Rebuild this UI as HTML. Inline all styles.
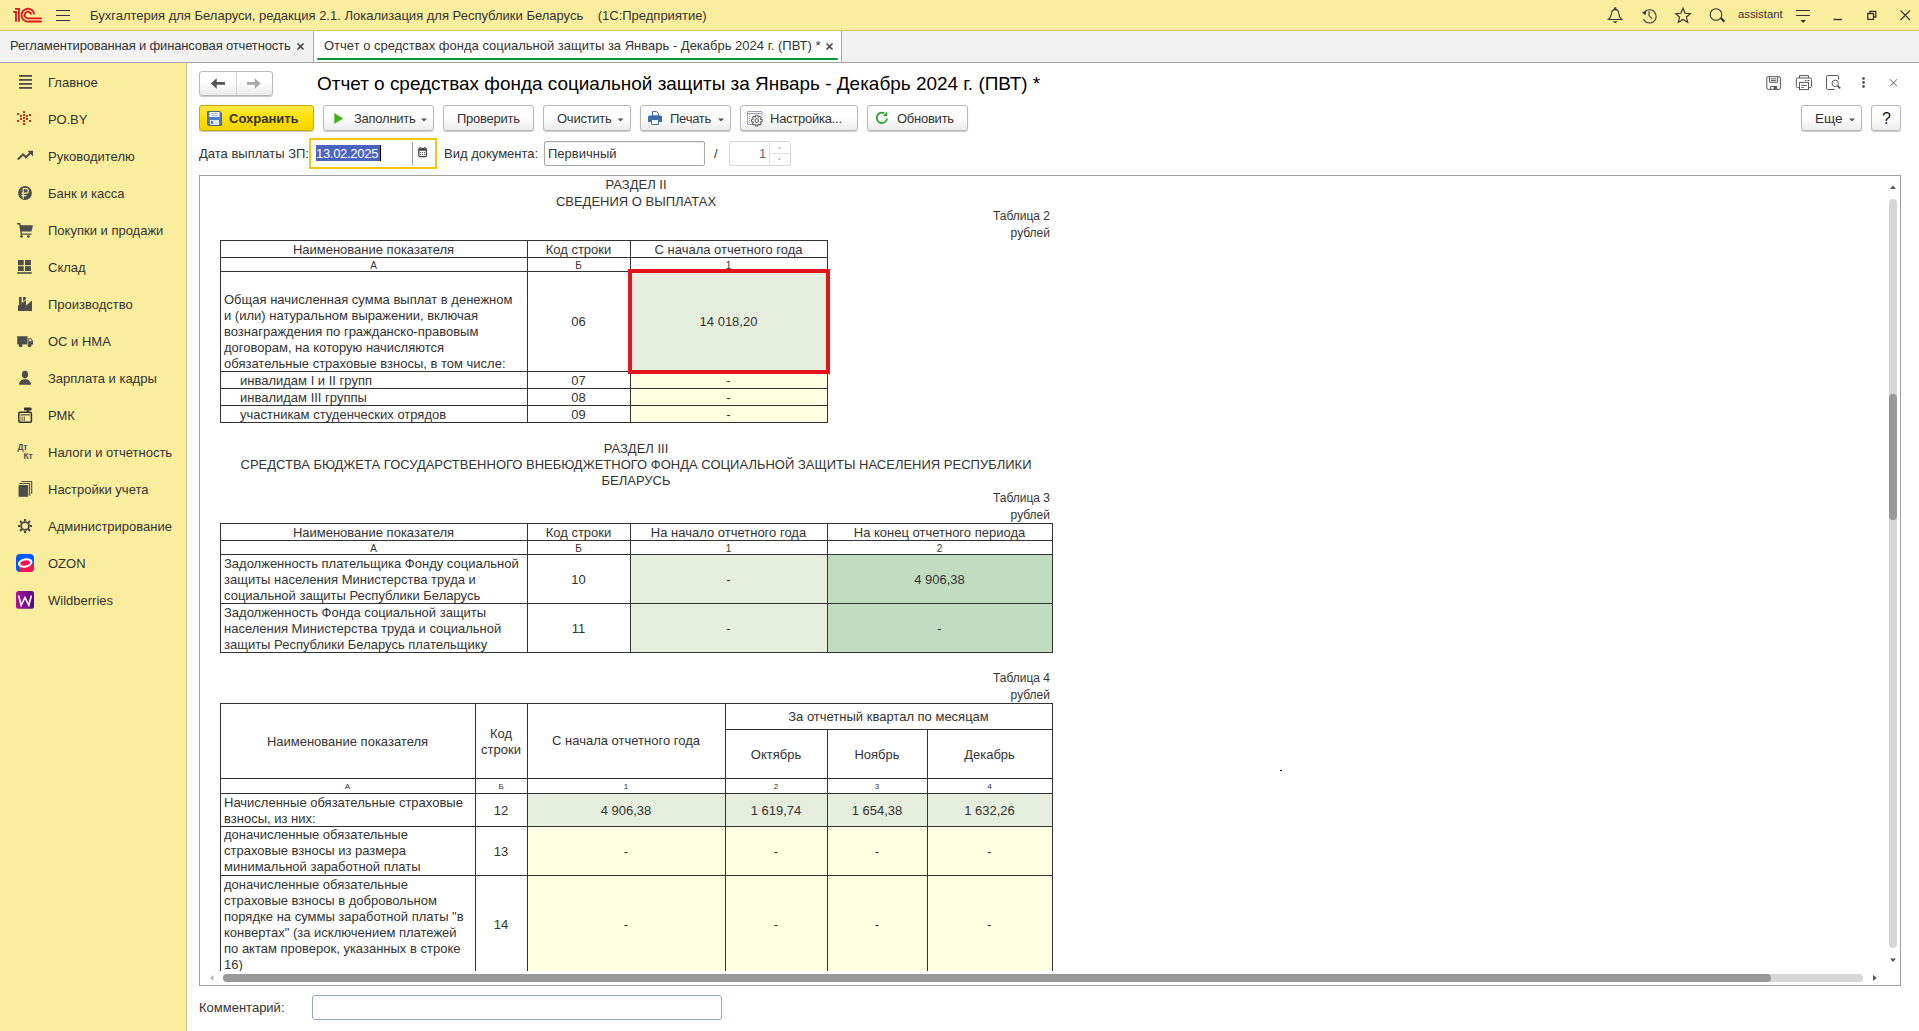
<!DOCTYPE html><html><head><meta charset="utf-8"><style>
*{margin:0;padding:0;box-sizing:border-box}
html,body{width:1919px;height:1031px;overflow:hidden;background:#fff;font-family:"Liberation Sans",sans-serif;font-size:13px;color:#333}
.a{position:absolute}
.t{position:absolute;white-space:nowrap;line-height:15px}
#top{left:0;top:0;width:1919px;height:31px;background:#FBED9E;border-bottom:1px solid #D2C27A}
#tabs{left:0;top:31px;width:1919px;height:32px;background:#F2F2F2;border-bottom:1px solid #A5A5A5}
#side{left:0;top:63px;width:187px;height:968px;background:#FBED9E;border-right:1px solid #CDC283}
.btn{position:absolute;top:105px;height:26px;border:1px solid #B8B8B8;border-radius:3px;background:linear-gradient(#fff,#fff 45%,#ECECEC);box-shadow:0 1px 1px rgba(0,0,0,.22)}
#ov{position:absolute;left:0;top:0;width:1919px;height:1031px;pointer-events:none}
</style></head><body>
<div id="top" class="a"></div><div id="tabs" class="a"></div><div id="side" class="a"></div>
<div class="t" style="left:90px;top:8px;">Бухгалтерия для Беларуси, редакция 2.1. Локализация для Республики Беларусь&nbsp;&nbsp;&nbsp; (1С:Предприятие)</div>
<div class="t" style="left:1738px;top:7px;font-size:11.3px">assistant</div>
<div class="a" style="left:313px;top:31px;width:1px;height:31px;background:#A5A5A5"></div>
<div class="a" style="left:314px;top:31px;width:527px;height:31px;background:#fff"></div>
<div class="a" style="left:841px;top:31px;width:1px;height:31px;background:#A5A5A5"></div>
<div class="a" style="left:317px;top:58px;width:521px;height:2px;background:#079235;border-radius:1px"></div>
<div class="t" style="left:10px;top:38px;letter-spacing:-0.15px">Регламентированная и финансовая отчетность</div>
<div class="t" style="left:324px;top:38px;">Отчет о средствах фонда социальной защиты за Январь - Декабрь 2024 г. (ПВТ) *</div>
<div class="t" style="left:48px;top:75px;">Главное</div>
<div class="t" style="left:48px;top:112px;">РО.BY</div>
<div class="t" style="left:48px;top:149px;">Руководителю</div>
<div class="t" style="left:48px;top:186px;">Банк и касса</div>
<div class="t" style="left:48px;top:223px;">Покупки и продажи</div>
<div class="t" style="left:48px;top:260px;">Склад</div>
<div class="t" style="left:48px;top:297px;">Производство</div>
<div class="t" style="left:48px;top:334px;">ОС и НМА</div>
<div class="t" style="left:48px;top:371px;">Зарплата и кадры</div>
<div class="t" style="left:48px;top:408px;">РМК</div>
<div class="t" style="left:48px;top:445px;">Налоги и отчетность</div>
<div class="t" style="left:48px;top:482px;">Настройки учета</div>
<div class="t" style="left:48px;top:519px;">Администрирование</div>
<div class="t" style="left:48px;top:556px;">OZON</div>
<div class="t" style="left:48px;top:593px;">Wildberries</div>
<div class="a" style="left:199px;top:71px;width:74px;height:25px;border:1px solid #B8B8B8;border-radius:3px;background:linear-gradient(#fff,#fff 45%,#ECECEC);box-shadow:0 1px 1px rgba(0,0,0,.22)"></div>
<div class="a" style="left:236px;top:72px;width:1px;height:23px;background:#D0D0D0"></div>
<div class="t" style="left:317px;top:74px;font-size:18.95px;line-height:20px;color:#000">Отчет о средствах фонда социальной защиты за Январь - Декабрь 2024 г. (ПВТ) *</div>
<div class="btn" style="left:199px;width:115px;background:linear-gradient(#FFE94A,#FFE000 50%,#F2D300);border-color:#C8A800"></div>
<div class="t" style="left:229px;top:111px;color:#333;font-size:13px"><b>Сохранить</b></div>
<div class="btn" style="left:323px;width:111px;"></div>
<div class="t" style="left:354px;top:111px;letter-spacing:-0.25px">Заполнить</div>
<div class="btn" style="left:443px;width:91px;"></div>
<div class="t" style="left:457px;top:111px;letter-spacing:-0.25px">Проверить</div>
<div class="btn" style="left:543px;width:88px;"></div>
<div class="t" style="left:557px;top:111px;letter-spacing:-0.25px">Очистить</div>
<div class="btn" style="left:640px;width:91px;"></div>
<div class="t" style="left:670px;top:111px;letter-spacing:-0.25px">Печать</div>
<div class="btn" style="left:740px;width:118px;"></div>
<div class="t" style="left:770px;top:111px;letter-spacing:-0.25px">Настройка...</div>
<div class="btn" style="left:867px;width:101px;"></div>
<div class="t" style="left:897px;top:111px;letter-spacing:-0.25px">Обновить</div>
<div class="btn" style="left:1801px;width:61px;"></div>
<div class="t" style="left:1815px;top:111px;font-size:13.6px">Еще</div>
<div class="btn" style="left:1871px;width:30px;"></div>
<div class="t" style="left:1882px;top:111px;color:#111;font-size:16px">?</div>
<div class="t" style="left:199px;top:146px;">Дата выплаты ЗП:</div>
<div class="a" style="left:309px;top:138px;width:128px;height:31px;border:2px solid #F8C70C;background:#fff"></div>
<div class="a" style="left:412px;top:142px;width:1px;height:23px;background:#A0A0A0"></div>
<div class="a" style="left:316px;top:145px;width:65px;height:16px;background:#4B63C0"></div>
<div class="a" style="left:380px;top:145px;width:1px;height:16px;background:#000"></div>
<div class="t" style="left:316px;top:146px;color:#fff;letter-spacing:-0.3px">13.02.2025</div>
<div class="t" style="left:444px;top:146px;">Вид документа:</div>
<div class="a" style="left:544px;top:141px;width:161px;height:25px;border:1px solid #A8A8A8;border-radius:2px;background:#fff;box-shadow:inset 0 1px 1px rgba(0,0,0,.08)"></div>
<div class="t" style="left:548px;top:146px;">Первичный</div>
<div class="t" style="left:714px;top:146px;">/</div>
<div class="a" style="left:729px;top:141px;width:62px;height:25px;border:1px solid #D6D6D6;border-radius:3px;background:#fff"></div>
<div class="a" style="left:769px;top:142px;width:1px;height:23px;background:#E2E2E2"></div>
<div class="a" style="left:770px;top:153px;width:20px;height:1px;background:#E2E2E2"></div>
<div class="t" style="left:759px;top:146px;color:#6A6A6A">1</div>
<div class="t" style="left:199px;top:1000px;">Комментарий:</div>
<div class="a" style="left:312px;top:995px;width:410px;height:25px;border:1px solid #8FA7C8;border-radius:3px;background:#fff"></div>
<div class="a" style="left:199px;top:175px;width:1702px;height:811px;border:1px solid #A0A0A0;background:#fff"></div>
<div class="a" style="left:200px;top:176px;width:1680px;height:795px;overflow:hidden"><div class="a" style="left:-200px;top:-176px;width:1919px;height:1031px">
<div class="t" style="left:220px;width:832px;text-align:center;top:177px;">РАЗДЕЛ II</div>
<div class="t" style="left:220px;width:832px;text-align:center;top:194px;">СВЕДЕНИЯ О ВЫПЛАТАХ</div>
<div class="t" style="left:750px;width:300px;text-align:right;top:209px;font-size:12px">Таблица 2</div>
<div class="t" style="left:750px;width:300px;text-align:right;top:226px;font-size:12px">рублей</div>
<div class="a" style="left:630px;top:271px;width:197px;height:100px;background:#E6EFDD"></div>
<div class="a" style="left:630px;top:371px;width:197px;height:17px;background:#FFFFE1"></div>
<div class="a" style="left:630px;top:388px;width:197px;height:17px;background:#FFFFE1"></div>
<div class="a" style="left:630px;top:405px;width:197px;height:17px;background:#FFFFE1"></div>
<div class="a" style="left:220px;top:240px;width:608px;height:1px;background:#333"></div>
<div class="a" style="left:220px;top:257px;width:608px;height:1px;background:#333"></div>
<div class="a" style="left:220px;top:271px;width:608px;height:1px;background:#333"></div>
<div class="a" style="left:220px;top:371px;width:608px;height:1px;background:#333"></div>
<div class="a" style="left:220px;top:388px;width:608px;height:1px;background:#333"></div>
<div class="a" style="left:220px;top:405px;width:608px;height:1px;background:#333"></div>
<div class="a" style="left:220px;top:422px;width:608px;height:1px;background:#333"></div>
<div class="a" style="left:220px;top:240px;width:1px;height:183px;background:#333"></div>
<div class="a" style="left:527px;top:240px;width:1px;height:183px;background:#333"></div>
<div class="a" style="left:630px;top:240px;width:1px;height:183px;background:#333"></div>
<div class="a" style="left:827px;top:240px;width:1px;height:183px;background:#333"></div>
<div class="t" style="left:220px;width:307px;text-align:center;top:242px;">Наименование показателя</div>
<div class="t" style="left:527px;width:103px;text-align:center;top:242px;">Код строки</div>
<div class="t" style="left:630px;width:197px;text-align:center;top:242px;">С начала отчетного года</div>
<div class="t" style="left:220px;width:307px;text-align:center;top:258px;font-size:10px">А</div>
<div class="t" style="left:527px;width:103px;text-align:center;top:258px;font-size:10px">Б</div>
<div class="t" style="left:630px;width:197px;text-align:center;top:258px;font-size:10px">1</div>
<div class="t" style="left:224px;top:292px;">Общая начисленная сумма выплат в денежном</div>
<div class="t" style="left:224px;top:308px;">и (или) натуральном выражении, включая</div>
<div class="t" style="left:224px;top:324px;">вознаграждения по гражданско-правовым</div>
<div class="t" style="left:224px;top:340px;">договорам, на которую начисляются</div>
<div class="t" style="left:224px;top:356px;">обязательные страховые взносы, в том числе:</div>
<div class="t" style="left:527px;width:103px;text-align:center;top:314px;">06</div>
<div class="t" style="left:630px;width:197px;text-align:center;top:314px;">14 018,20</div>
<div class="t" style="left:240px;top:373px;">инвалидам I и II групп</div>
<div class="t" style="left:527px;width:103px;text-align:center;top:373px;">07</div>
<div class="t" style="left:630px;width:197px;text-align:center;top:373px;">-</div>
<div class="t" style="left:240px;top:390px;">инвалидам III группы</div>
<div class="t" style="left:527px;width:103px;text-align:center;top:390px;">08</div>
<div class="t" style="left:630px;width:197px;text-align:center;top:390px;">-</div>
<div class="t" style="left:240px;top:407px;">участникам студенческих отрядов</div>
<div class="t" style="left:527px;width:103px;text-align:center;top:407px;">09</div>
<div class="t" style="left:630px;width:197px;text-align:center;top:407px;">-</div>
<div class="a" style="left:628px;top:269px;width:202px;height:105px;border:4px solid #E3151A"></div>
<div class="t" style="left:220px;width:832px;text-align:center;top:441px;">РАЗДЕЛ III</div>
<div class="t" style="left:220px;width:832px;text-align:center;top:457px;">СРЕДСТВА БЮДЖЕТА ГОСУДАРСТВЕННОГО ВНЕБЮДЖЕТНОГО ФОНДА СОЦИАЛЬНОЙ ЗАЩИТЫ НАСЕЛЕНИЯ РЕСПУБЛИКИ</div>
<div class="t" style="left:220px;width:832px;text-align:center;top:473px;">БЕЛАРУСЬ</div>
<div class="t" style="left:750px;width:300px;text-align:right;top:491px;font-size:12px">Таблица 3</div>
<div class="t" style="left:750px;width:300px;text-align:right;top:508px;font-size:12px">рублей</div>
<div class="a" style="left:630px;top:554px;width:197px;height:98px;background:#E6EFDD"></div>
<div class="a" style="left:827px;top:554px;width:225px;height:98px;background:#C0DCC1"></div>
<div class="a" style="left:220px;top:523px;width:833px;height:1px;background:#333"></div>
<div class="a" style="left:220px;top:540px;width:833px;height:1px;background:#333"></div>
<div class="a" style="left:220px;top:554px;width:833px;height:1px;background:#333"></div>
<div class="a" style="left:220px;top:603px;width:833px;height:1px;background:#333"></div>
<div class="a" style="left:220px;top:652px;width:833px;height:1px;background:#333"></div>
<div class="a" style="left:220px;top:523px;width:1px;height:130px;background:#333"></div>
<div class="a" style="left:527px;top:523px;width:1px;height:130px;background:#333"></div>
<div class="a" style="left:630px;top:523px;width:1px;height:130px;background:#333"></div>
<div class="a" style="left:827px;top:523px;width:1px;height:130px;background:#333"></div>
<div class="a" style="left:1052px;top:523px;width:1px;height:130px;background:#333"></div>
<div class="t" style="left:220px;width:307px;text-align:center;top:525px;">Наименование показателя</div>
<div class="t" style="left:527px;width:103px;text-align:center;top:525px;">Код строки</div>
<div class="t" style="left:630px;width:197px;text-align:center;top:525px;">На начало отчетного года</div>
<div class="t" style="left:827px;width:225px;text-align:center;top:525px;">На конец отчетного периода</div>
<div class="t" style="left:220px;width:307px;text-align:center;top:541px;font-size:10px">А</div>
<div class="t" style="left:527px;width:103px;text-align:center;top:541px;font-size:10px">Б</div>
<div class="t" style="left:630px;width:197px;text-align:center;top:541px;font-size:10px">1</div>
<div class="t" style="left:827px;width:225px;text-align:center;top:541px;font-size:10px">2</div>
<div class="t" style="left:224px;top:556px;">Задолженность плательщика Фонду социальной</div>
<div class="t" style="left:224px;top:572px;">защиты населения Министерства труда и</div>
<div class="t" style="left:224px;top:588px;">социальной защиты Республики Беларусь</div>
<div class="t" style="left:527px;width:103px;text-align:center;top:572px;">10</div>
<div class="t" style="left:630px;width:197px;text-align:center;top:572px;">-</div>
<div class="t" style="left:827px;width:225px;text-align:center;top:572px;">4 906,38</div>
<div class="t" style="left:224px;top:605px;">Задолженность Фонда социальной защиты</div>
<div class="t" style="left:224px;top:621px;">населения Министерства труда и социальной</div>
<div class="t" style="left:224px;top:637px;">защиты Республики Беларусь плательщику</div>
<div class="t" style="left:527px;width:103px;text-align:center;top:621px;">11</div>
<div class="t" style="left:630px;width:197px;text-align:center;top:621px;">-</div>
<div class="t" style="left:827px;width:225px;text-align:center;top:621px;">-</div>
<div class="t" style="left:750px;width:300px;text-align:right;top:671px;font-size:12px">Таблица 4</div>
<div class="t" style="left:750px;width:300px;text-align:right;top:688px;font-size:12px">рублей</div>
<div class="a" style="left:527px;top:793px;width:525px;height:33px;background:#E6EFDD"></div>
<div class="a" style="left:527px;top:826px;width:525px;height:146px;background:#FFFFE1"></div>
<div class="a" style="left:220px;top:703px;width:833px;height:1px;background:#333"></div>
<div class="a" style="left:725px;top:729px;width:328px;height:1px;background:#333"></div>
<div class="a" style="left:220px;top:778px;width:833px;height:1px;background:#333"></div>
<div class="a" style="left:220px;top:793px;width:833px;height:1px;background:#333"></div>
<div class="a" style="left:220px;top:826px;width:833px;height:1px;background:#333"></div>
<div class="a" style="left:220px;top:875px;width:833px;height:1px;background:#333"></div>
<div class="a" style="left:220px;top:971px;width:833px;height:1px;background:#333"></div>
<div class="a" style="left:220px;top:703px;width:1px;height:269px;background:#333"></div>
<div class="a" style="left:475px;top:703px;width:1px;height:269px;background:#333"></div>
<div class="a" style="left:527px;top:703px;width:1px;height:269px;background:#333"></div>
<div class="a" style="left:725px;top:703px;width:1px;height:269px;background:#333"></div>
<div class="a" style="left:1052px;top:703px;width:1px;height:269px;background:#333"></div>
<div class="a" style="left:827px;top:729px;width:1px;height:243px;background:#333"></div>
<div class="a" style="left:927px;top:729px;width:1px;height:243px;background:#333"></div>
<div class="t" style="left:220px;width:255px;text-align:center;top:734px;">Наименование показателя</div>
<div class="t" style="left:475px;width:52px;text-align:center;top:726px;">Код</div>
<div class="t" style="left:475px;width:52px;text-align:center;top:742px;">строки</div>
<div class="t" style="left:527px;width:198px;text-align:center;top:733px;">С начала отчетного года</div>
<div class="t" style="left:725px;width:327px;text-align:center;top:709px;">За отчетный квартал по месяцам</div>
<div class="t" style="left:725px;width:102px;text-align:center;top:747px;">Октябрь</div>
<div class="t" style="left:827px;width:100px;text-align:center;top:747px;">Ноябрь</div>
<div class="t" style="left:927px;width:125px;text-align:center;top:747px;">Декабрь</div>
<div class="t" style="left:220px;width:255px;text-align:center;top:779px;font-size:8px">А</div>
<div class="t" style="left:475px;width:52px;text-align:center;top:779px;font-size:8px">Б</div>
<div class="t" style="left:527px;width:198px;text-align:center;top:779px;font-size:8px">1</div>
<div class="t" style="left:725px;width:102px;text-align:center;top:779px;font-size:8px">2</div>
<div class="t" style="left:827px;width:100px;text-align:center;top:779px;font-size:8px">3</div>
<div class="t" style="left:927px;width:125px;text-align:center;top:779px;font-size:8px">4</div>
<div class="t" style="left:224px;top:795px;">Начисленные обязательные страховые</div>
<div class="t" style="left:224px;top:811px;">взносы, из них:</div>
<div class="t" style="left:475px;width:52px;text-align:center;top:803px;">12</div>
<div class="t" style="left:527px;width:198px;text-align:center;top:803px;">4 906,38</div>
<div class="t" style="left:725px;width:102px;text-align:center;top:803px;">1 619,74</div>
<div class="t" style="left:827px;width:100px;text-align:center;top:803px;">1 654,38</div>
<div class="t" style="left:927px;width:125px;text-align:center;top:803px;">1 632,26</div>
<div class="t" style="left:224px;top:827px;">доначисленные обязательные</div>
<div class="t" style="left:224px;top:843px;">страховые взносы из размера</div>
<div class="t" style="left:224px;top:859px;">минимальной заработной платы</div>
<div class="t" style="left:475px;width:52px;text-align:center;top:844px;">13</div>
<div class="t" style="left:527px;width:198px;text-align:center;top:844px;">-</div>
<div class="t" style="left:725px;width:102px;text-align:center;top:844px;">-</div>
<div class="t" style="left:827px;width:100px;text-align:center;top:844px;">-</div>
<div class="t" style="left:927px;width:125px;text-align:center;top:844px;">-</div>
<div class="t" style="left:224px;top:877px;">доначисленные обязательные</div>
<div class="t" style="left:224px;top:893px;">страховые взносы в добровольном</div>
<div class="t" style="left:224px;top:909px;">порядке на суммы заработной платы "в</div>
<div class="t" style="left:224px;top:925px;">конвертах" (за исключением платежей</div>
<div class="t" style="left:224px;top:941px;">по актам проверок, указанных в строке</div>
<div class="t" style="left:224px;top:957px;">16)</div>
<div class="t" style="left:475px;width:52px;text-align:center;top:917px;">14</div>
<div class="t" style="left:527px;width:198px;text-align:center;top:917px;">-</div>
<div class="t" style="left:725px;width:102px;text-align:center;top:917px;">-</div>
<div class="t" style="left:827px;width:100px;text-align:center;top:917px;">-</div>
<div class="t" style="left:927px;width:125px;text-align:center;top:917px;">-</div>
<div class="a" style="left:1280px;top:770px;width:2px;height:1px;background:#111"></div>
</div></div>
<div class="a" style="left:1889px;top:199px;width:8px;height:749px;background:#D6D6D6;border-radius:4px"></div>
<div class="a" style="left:1889px;top:394px;width:8px;height:126px;background:#999;border-radius:4px"></div>
<div class="a" style="left:223px;top:974px;width:1640px;height:8px;background:#D6D6D6;border-radius:4px"></div>
<div class="a" style="left:223px;top:974px;width:1548px;height:8px;background:#999;border-radius:4px"></div>
<svg id="ov" width="1919" height="1031" viewBox="0 0 1919 1031">
<g fill="none" stroke="#D9141B" stroke-width="1.8">
<path d="M13.1,11.8H16V21.8"/><path d="M15,8.8H18.9V21.8"/>
<path d="M34.3,14.3A6.4,6.4 0 1 0 28.6,21.5H41.8"/><path d="M31.2,14.6A3.3,3.3 0 1 0 28.6,18.3H41.8"/></g>
<g stroke="#333" stroke-width="1.2"><path d="M56,10.5H70M56,15.5H70M56,20.5H70"/></g>
<g fill="none" stroke="#333" stroke-width="1.1">
<path d="M1608.5,19.5H1621.8C1619.6,17.5 1619,15.5 1618.8,13.5C1618.6,11 1617.3,9.6 1615.2,9.6C1613,9.6 1611.7,11 1611.5,13.5C1611.3,15.5 1610.7,17.5 1608.5,19.5Z"/><circle cx="1615.2" cy="8.6" r="0.8"/>
<path d="M1644.5,12.2A6.6,6.6 0 1 1 1643.5,19"/><path d="M1649,11.2V15.5L1652.2,19"/>
<path d="M1683,8.2L1685.1,13.2L1690.4,13.6L1686.4,17L1687.7,22.3L1683,19.5L1678.3,22.3L1679.6,17L1675.6,13.6L1680.9,13.2Z" stroke-linejoin="miter"/>
<circle cx="1716" cy="14.5" r="5.8"/>
<path d="M1796,10.5H1810M1796,15.5H1810" stroke-width="1.2"/>
<path d="M1833.5,19.5H1842" stroke-width="1.4"/>
<path d="M1867.8,13.5H1873.5V19.3H1867.8Z M1870,13.5V11.3H1875.8V17H1873.5" stroke-width="1.3"/>
<path d="M1900.5,10.5L1910,20M1910,10.5L1900.5,20" stroke-width="1.1"/>
</g>
<g fill="#333">
<path d="M1612.6,21.2H1617.8L1615.2,23.3Z"/>
<path d="M1642,12.5L1646.5,10.8L1645.3,15.2Z"/>
<path d="M1720,18.5L1722,17.5L1725,21L1723.5,22.5Z"/>
<path d="M1800.5,20H1806L1803.2,23Z"/>
</g>

<g stroke="#444" stroke-width="1.6" fill="none">
<path d="M297.5,43.5L303.5,49.5M303.5,43.5L297.5,49.5"/>
<path d="M826.5,43.5L832.5,49.5M832.5,43.5L826.5,49.5"/></g>
<g fill="#555"><path d="M210.7,83.4L216.7,78.2V82.1H225V84.7H216.7V88.8Z"/></g>
<g fill="#A8A8A8"><path d="M260.8,83.4L254.8,78.2V82.1H247V84.7H254.8V88.8Z"/></g>
<g fill="none" stroke="#5A5A5A" stroke-width="1">
<rect x="1766.8" y="76.7" width="13.6" height="12.7" rx="1.3"/>
<path d="M1769.5,76.7V82.3H1777.6V76.7"/><path d="M1770.8,78.8H1776.3M1770.8,80.6H1776.3"/><path d="M1770.6,89.4V86.4H1776.8V89.4"/>
<path d="M1799.5,78V75.6H1808.5V78"/>
<path d="M1799,87.6H1797.6A1.3,1.3 0 0 1 1796.3,86.3V79.3A1.3,1.3 0 0 1 1797.6,78H1810.2A1.3,1.3 0 0 1 1811.5,79.3V86.3A1.3,1.3 0 0 1 1810.2,87.6H1808.9"/>
<rect x="1799.5" y="82.4" width="9" height="7.2" fill="#fff"/>
<path d="M1801.3,85.4H1806.7M1801.3,87.4H1803.8M1805,80.5H1806.3M1807.5,80.5H1809.5"/>
<path d="M1834.5,89.5H1827.7A1.2,1.2 0 0 1 1826.5,88.3V76.7A1.2,1.2 0 0 1 1827.7,75.5H1837.3A1.2,1.2 0 0 1 1838.5,76.7V79.5"/>
<circle cx="1835.2" cy="83.3" r="3.2" stroke="#fff" stroke-width="2.6"/>
<circle cx="1835.2" cy="83.3" r="3.2"/>
<path d="M1837.6,85.8L1840.2,88.4" stroke-width="1.9"/>
<path d="M1890,79.3L1897,86.3M1897,79.3L1890,86.3"/>
</g>
<g fill="#5A5A5A"><circle cx="1863.5" cy="78.5" r="1.4"/><circle cx="1863.5" cy="82.5" r="1.4"/><circle cx="1863.5" cy="86.5" r="1.4"/>
<rect x="1773.6" y="86.4" width="2.8" height="2.7"/></g>
<g fill="#555">
<path d="M421,118.5H427L424,121.5Z"/><path d="M617.5,118.5H623.5L620.5,121.5Z"/><path d="M718,118.5H724L721,121.5Z"/><path d="M1849,118.5H1855L1852,121.5Z"/></g>
<path d="M334.3,113L343,118.5L334.3,124Z" fill="#42B012"/>
<g>
<path d="M207.5,111.5H220L221.5,113V125.5H208.5L207.5,124.5Z" fill="#4A7EC0" stroke="#2E5A95" stroke-width="0.8"/>
<rect x="209.5" y="112" width="10" height="5" fill="#fff"/><path d="M211,113.5H218M211,115.5H218" stroke="#8AA8D0" stroke-width="0.8"/>
<rect x="210" y="120" width="9" height="5" fill="#DDE6F2"/><rect x="211" y="121" width="2" height="3" fill="#4A7EC0"/>
</g>
<g>
<path d="M652.5,111.5H656.5L658.5,113.5V116H652.5Z" fill="#fff" stroke="#3F6FA8" stroke-width="1"/>
<path d="M649.5,115.5H660.5A1.5,1.5 0 0 1 662,117V122H659V120H651V122H648V117A1.5,1.5 0 0 1 649.5,115.5Z" fill="#3F6FA8"/>
<path d="M651.5,119.5H658.5V124.5H651.5Z" fill="#fff" stroke="#3F6FA8" stroke-width="1"/>
</g>
<g fill="none" stroke="#8B9AB8" stroke-width="0.9">
<path d="M753,124.5H747.5V111.5H762V116"/><path d="M747.5,113.5H762"/><path d="M749.5,114V124.5" stroke-dasharray="1 1"/>
</g>
<g fill="none" stroke="#666" stroke-width="1.1">
<path d="M760.60,119.36L762.10,119.57L762.10,121.63L760.60,121.84L760.37,122.41L761.28,123.62L759.82,125.08L758.61,124.17L758.04,124.40L757.83,125.90L755.77,125.90L755.56,124.40L754.99,124.17L753.78,125.08L752.32,123.62L753.23,122.41L753.00,121.84L751.50,121.63L751.50,119.57L753.00,119.36L753.23,118.79L752.32,117.58L753.78,116.12L754.99,117.03L755.56,116.80L755.77,115.30L757.83,115.30L758.04,116.80L758.61,117.03L759.82,116.12L761.28,117.58L760.37,118.79Z"/>
<circle cx="756.8" cy="120.6" r="1.8"/>
</g>
<g fill="none" stroke="#26A12A" stroke-width="1.7"><path d="M884.5,113.3A5.2,5.2 0 1 0 887.1,118.5"/></g>
<path d="M882.9,116H887.2V111.7Z" fill="#26A12A"/>

<g>
<rect x="418.8" y="148.6" width="7.6" height="8" rx="1" fill="none" stroke="#444" stroke-width="1.2"/>
<rect x="418.4" y="148.2" width="8.4" height="2.6" rx="0.8" fill="#444"/>
<circle cx="420.5" cy="147.8" r="0.9" fill="#444"/><circle cx="424.6" cy="147.8" r="0.9" fill="#444"/>
<circle cx="420.5" cy="148.4" r="0.45" fill="#fff"/><circle cx="424.6" cy="148.4" r="0.45" fill="#fff"/>
<g fill="#444"><circle cx="420.6" cy="152.6" r="0.6"/><circle cx="422.6" cy="152.6" r="0.6"/><circle cx="424.6" cy="152.6" r="0.6"/>
<circle cx="420.6" cy="154.6" r="0.6"/><circle cx="422.6" cy="154.6" r="0.6"/><circle cx="424.6" cy="154.6" r="0.6"/></g>
</g>
<g fill="#999"><path d="M778,148.5H781L779.5,147Z"/><path d="M778,158.5H781L779.5,160Z"/></g>
<g fill="#555"><path d="M1890,189H1896L1893,185.5Z"/><path d="M1890,958.5H1896L1893,962Z"/><path d="M1873,975V981L1876.8,978Z"/></g>
<path d="M213.5,975V981L209.7,978Z" fill="#BBB"/>

<g fill="#4D4D4D">
<rect x="19" y="75" width="13" height="1.8"/><rect x="19" y="79" width="13" height="1.8"/><rect x="19" y="83" width="13" height="1.8"/><rect x="19" y="87" width="13" height="1.8"/>
</g>
<g fill="#D52B14">
<rect x="23" y="111" width="2" height="2"/><rect x="23" y="114" width="2" height="2"/><rect x="23" y="117" width="2" height="2"/><rect x="23" y="120" width="2" height="2"/><rect x="23" y="123" width="2" height="2"/>
<rect x="20" y="115" width="2" height="2"/><rect x="20" y="118" width="2" height="2"/><rect x="26" y="115" width="2" height="2"/><rect x="26" y="118" width="2" height="2"/>
<rect x="17" y="113" width="2" height="2"/><rect x="17" y="120" width="2" height="2"/><rect x="29" y="114" width="2" height="2"/><rect x="29" y="120" width="2" height="2"/>
</g>
<g fill="none" stroke="#4D4D4D" stroke-width="2"><path d="M17.8,159.5L23.1,154.3L26,157.3L30.5,152.8"/></g>
<g fill="#4D4D4D">
<path d="M33,150.8V156.5L27.5,150.8Z"/>
<circle cx="25" cy="193" r="6.9"/>
<path d="M19.5,225.3H33L31.5,231.5H21Z"/><path d="M17,223H20.3L22,233.5H31.5V234.8H20.8L19.2,224.4H17Z"/>
<circle cx="21.5" cy="236.4" r="1.4"/><circle cx="28.4" cy="236.4" r="1.4"/>
<rect x="18" y="260" width="5.7" height="5.2"/><rect x="25" y="260" width="5.9" height="5.2"/><rect x="18" y="266.2" width="5.7" height="4.8"/><rect x="25" y="266.2" width="5.9" height="4.8"/><rect x="17.2" y="272.2" width="14.6" height="1.6"/>
<path d="M18,311V305.5L26,300.2V305.5L32,300.5V311Z"/><path d="M19,297H21.6V303.3L19,305Z"/><path d="M23.1,297H25.9V299.3L23.1,301.2Z"/>
<path d="M17.2,336.2H27.6V344.4H17.2Z"/><path d="M28.3,338.3H31.2L33,341V344.4H28.3Z"/>
<circle cx="20.6" cy="345.3" r="1.9"/><circle cx="29.6" cy="345.3" r="1.9"/>
<ellipse cx="25" cy="374.6" rx="3.1" ry="3.8"/><path d="M19,384.8C19,381 21.5,379.2 25,379.2C28.5,379.2 31,381 31,384.8Z"/>
<rect x="18.6" y="485" width="9.6" height="11.8"/>
</g>
<g fill="#FBED9E"><path d="M29.2,339.3H30.8L32,341.2H29.2Z"/><path d="M22.5,196.5h5" /></g>
<g fill="none" stroke="#FBED9E" stroke-width="1.2"><path d="M23.2,198.8V188.6H26A2.3,2.3 0 0 1 26,193.2H21.5M21.5,195.6H26.3"/></g>
<g fill="none" stroke="#4D4D4D" stroke-width="1.1">
<path d="M19.2,483.5H29.6V495.8M21.3,481.5H31.7V493.8"/>
</g>
<g fill="none" stroke="#333" stroke-width="1.5">
<rect x="18.8" y="412.2" width="12.6" height="10" rx="1.2"/>
</g>
<g fill="#333"><rect x="24" y="407.5" width="7.5" height="3" rx="0.8"/><rect x="26.8" y="410.3" width="2" height="2"/></g>
<g fill="#7C7458"><rect x="20.2" y="414" width="10" height="1.6"/><rect x="20.5" y="416.5" width="1" height="4.5"/><rect x="22.3" y="416.5" width="1" height="4.5"/><rect x="24" y="416.5" width="1" height="4.5"/></g>
<text x="17.5" y="450" font-family="Liberation Sans" font-weight="bold" font-size="8.5" fill="#4D4D4D" letter-spacing="-0.3">Дт</text>
<text x="23.5" y="459" font-family="Liberation Sans" font-weight="bold" font-size="8.5" fill="#4D4D4D" letter-spacing="-0.3">Кт</text>
<g fill="none" stroke="#4D4D4D">
<circle cx="25.05" cy="526" r="3.9" stroke-width="1.9"/>
<path d="M25.05,519V521.5M25.05,530.5V533M18,526H20.5M29.5,526H32M20.1,521L21.9,522.9M28.2,529.1L30,531M30,521L28.2,522.9M21.9,529.1L20.1,531" stroke-width="2.2"/>
</g>
<defs><clipPath id="oz"><rect x="16" y="554" width="18" height="18" rx="4"/></clipPath>
<linearGradient id="wbg" x1="0" x2="1" y1="0" y2="0"><stop offset="0" stop-color="#B4109E"/><stop offset="1" stop-color="#4C0A7A"/></linearGradient></defs>
<g clip-path="url(#oz)">
<rect x="16" y="554" width="18" height="18" fill="#005BFF"/>
<path d="M19.5,572V567L34,564V572Z" fill="#F91155"/>
<ellipse cx="25.2" cy="563" rx="7.4" ry="4.6" transform="rotate(-12 25.2 563)" fill="#fff"/>
<ellipse cx="25.2" cy="563" rx="5" ry="2.6" transform="rotate(-12 25.2 563)" fill="#F91155"/>
</g>
<rect x="16" y="591" width="18" height="17.8" rx="2.5" fill="url(#wbg)"/>
<path d="M18.6,595.5L21.2,605.2L25,597.5L28.8,605.2L31.4,595.5" fill="none" stroke="#fff" stroke-width="1.6" stroke-linejoin="miter"/>
</svg>
</body></html>
